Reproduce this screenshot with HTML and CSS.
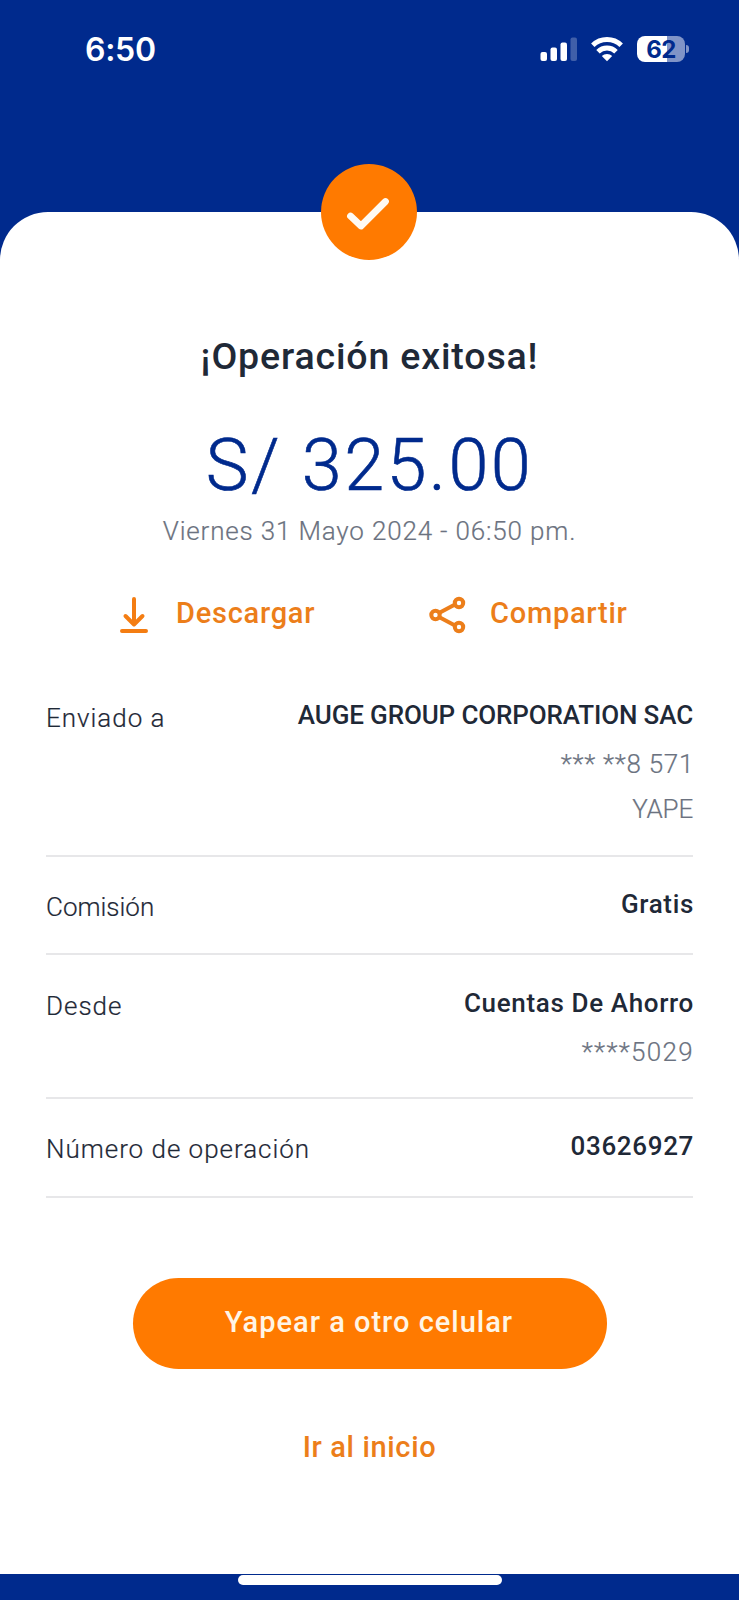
FILE: index.html
```html
<!DOCTYPE html>
<html lang="es">
<head>
<meta charset="utf-8">
<title>Operación exitosa</title>
<link rel="stylesheet" href="styles.css">
</head>
<body>
<header class="status">
  <span class="clock">6:50</span>
  <div class="indicators">
    <svg class="signal" width="38" height="26" viewBox="0 0 38 26" fill="#fff">
      <rect x="0.500" y="16" width="6.500" height="9" rx="2"/>
      <rect x="10.500" y="11.500" width="6.500" height="13.500" rx="2"/>
      <rect x="20.500" y="6.500" width="6.500" height="18.500" rx="2"/>
      <rect x="30.500" y="1.500" width="6.500" height="23.500" rx="2" opacity=".25"/>
    </svg>
    <svg class="wifi" width="32" height="26" viewBox="0 0 32 26" fill="none" stroke="#fff" stroke-width="4.900">
      <path d="M1.800 9.300a20.300 20.300 0 0 1 28.400 0"/>
      <path d="M7 15.700a12.800 12.800 0 0 1 18 0"/>
      <path d="M16 25.300l-5.200-5.200a7.400 7.400 0 0 1 10.400 0z" fill="#fff" stroke="none"/>
    </svg>
    <div class="battery"><span class="battery-body">62</span><span class="battery-tip"></span></div>
  </div>
</header>
<main class="sheet">
  <div class="badge">
    <svg width="96" height="96" viewBox="0 0 96 96" fill="none" stroke="#fffaf2" stroke-width="6.800" stroke-linecap="round" stroke-linejoin="round"><path d="M29.500 52l10.500 10 24.500-24.500"/></svg>
  </div>
  <h1 class="title">¡Operación exitosa!</h1>
  <p class="amount">S/ 325.00</p>
  <p class="date">Viernes 31 Mayo 2024 - 06:50 pm.</p>
  <div class="actions">
    <a class="action download">
      <svg width="28" height="38" viewBox="0 0 28 38" fill="none" stroke="#f47d12" stroke-width="4" stroke-linecap="round" stroke-linejoin="round"><path d="M14 3v25M5.500 20l8.500 8.500 8.500-8.500M2 35h24"/></svg>
      <span>Descargar</span>
    </a>
    <a class="action share">
      <svg width="38" height="38" viewBox="0 0 38 38" fill="none" stroke="#ec7e1a" stroke-width="4"><path d="M10 17L26 8.500M10 21L26 29.500"/><circle cx="6.500" cy="19" r="4.200"/><circle cx="30" cy="7" r="4.200"/><circle cx="30" cy="31" r="4.200"/></svg>
      <span>Compartir</span>
    </a>
  </div>
  <dl class="details">
    <div class="row">
      <dt class="wide">Enviado a</dt>
      <dd><strong class="company">AUGE GROUP CORPORATION SAC</strong><span class="sub phone">*** **8 571</span><span class="sub wallet">YAPE</span></dd>
    </div>
    <div class="row">
      <dt>Comisión</dt>
      <dd><strong>Gratis</strong></dd>
    </div>
    <div class="row">
      <dt class="wide">Desde</dt>
      <dd><strong>Cuentas De Ahorro</strong><span class="sub account">****5029</span></dd>
    </div>
    <div class="row">
      <dt class="wide">Número de operación</dt>
      <dd><strong>03626927</strong></dd>
    </div>
  </dl>
  <button class="primary">Yapear a otro celular</button>
  <a class="home">Ir al inicio</a>
</main>
<footer class="bottom"><div class="home-indicator"></div></footer>
</body>
</html>
```
FILE: styles.css
```css
* { box-sizing: border-box; }

body {
  margin: 0;
  width: 739px;
  height: 1600px;
  display: flex;
  flex-direction: column;
  background: #002a8d;
  font-family: Roboto, "Noto Sans", sans-serif;
  color: #1f2937;
  overflow: hidden;
}

/* Status bar */
.status {
  height: 212px;
  flex: none;
  display: flex;
  justify-content: space-between;
  align-items: flex-start;
  padding: 29px 50px 0 85px;
}
.clock { font: 600 32px/42px Inter, sans-serif; letter-spacing: -0.3px; color: #fff; }
.indicators { display: flex; padding-top: 7px; }
.wifi { margin-left: 13px; }
.battery { display: flex; align-items: center; margin-left: 14px; }
.battery-body {
  width: 48px;
  height: 26px;
  border-radius: 8px;
  background: linear-gradient(90deg, #fff 62%, #8094c7 62%);
  color: #002a8d;
  font: 700 24px/27px Inter, sans-serif;
  letter-spacing: -0.5px;
  text-align: center;
}
.battery-tip { width: 3px; height: 8px; margin-left: 1px; border-radius: 0 4px 4px 0; background: #8094c7; }

/* Receipt sheet */
.sheet {
  position: relative;
  flex: none;
  height: 1362px;
  background: #fff;
  border-radius: 48px 48px 0 0;
  padding: 120px 46px 0;
  display: flex;
  flex-direction: column;
}
.badge {
  position: absolute;
  left: 321px;
  top: -48px;
  width: 96px;
  height: 96px;
  border-radius: 50%;
  background: #ff7a00;
}
.title { margin: 0; font-size: 37.5px; font-weight: 500; line-height: 48px; letter-spacing: 0.85px; text-align: center; }
.amount { margin: 44px 0 0; font-size: 72px; font-weight: 300; line-height: 84px; letter-spacing: 2.4px; text-align: center; color: #002a8d; -webkit-text-stroke: 0.6px; }
.date { margin: 7px 0 0; font-size: 26px; font-weight: 300; line-height: 32px; letter-spacing: 0.83px; text-align: center; color: #6b7280; -webkit-text-stroke: 0.2px; }

.actions { display: flex; margin: 46px 0 0 74px; font-size: 29px; font-weight: 500; line-height: 40px; letter-spacing: 0.75px; color: #ec7e1a; }
.action { display: flex; }
.download { width: 309px; gap: 28px; }
.share { gap: 23px; }
.action svg { margin-top: 3px; }

/* Operation details */
.details { margin: 33px 0 0; font-size: 26px; line-height: 36px; }
.row { display: flex; justify-content: space-between; border-bottom: 2px solid #e7e7e9; padding: 30px 0 27.5px; }
.row + .row { padding-top: 29.3px; }
dt { font-weight: 300; padding-top: 3px; -webkit-text-stroke: 0.2px; }
.wide { letter-spacing: 0.97px; }
dd { margin: 0 -1px 0 0; display: flex; flex-direction: column; align-items: flex-end; }
strong { height: 40px; font-weight: 500; letter-spacing: 0.65px; }
.company { letter-spacing: -0.13px; margin-right: 1px; }
.sub { margin-top: 9px; font-weight: 300; color: #6b7280; -webkit-text-stroke: 0.2px; }
.phone { letter-spacing: 0.7px; }
.wallet { letter-spacing: -0.2px; margin-right: 1px; }
.account { letter-spacing: 1.3px; }

/* Footer actions */
.primary {
  width: 474px;
  height: 91px;
  margin: 80px 0 0;
  padding: 0 1px 3px 0;
  align-self: center;
  border: 0;
  border-radius: 46px;
  background: #ff7a00;
  color: #fff5e6;
  font: 500 29px Roboto, sans-serif;
  letter-spacing: 1px;
}
.home { align-self: center; margin-top: 58px; font-size: 29px; font-weight: 500; line-height: 40px; letter-spacing: 0.65px; color: #ec7e1a; }

.bottom { height: 26px; flex: none; display: flex; justify-content: center; padding-top: 1px; }
.home-indicator { width: 264px; height: 10px; border-radius: 5px; background: #fff; }
```
